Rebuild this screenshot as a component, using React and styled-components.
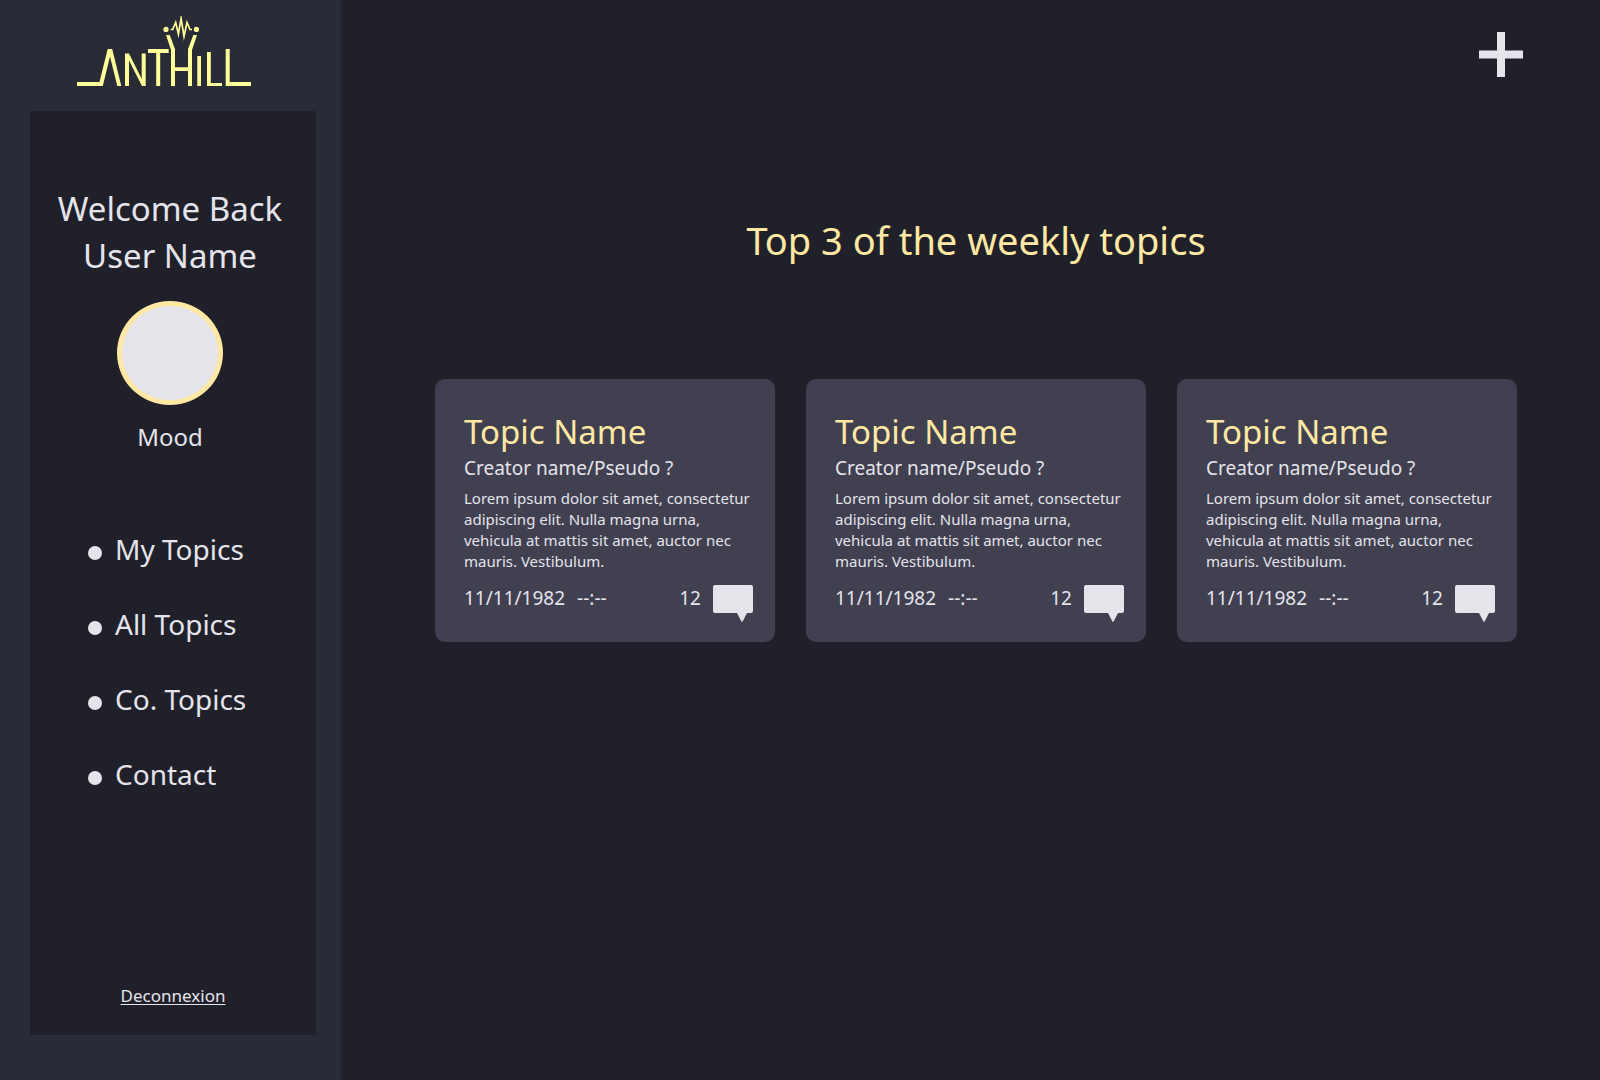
import React from "react";
import styled, { createGlobalStyle, ThemeProvider } from "styled-components";

const theme = {
  page: "#20202a",
  sidebar: "#292b37",
  card: "#404051",
  text: "#e5e4ea",
  accent: "#ffe8a3",
  logo: "#ffff99",
};

const GlobalStyle = createGlobalStyle`
  *, *::before, *::after { box-sizing: border-box; }
  body {
    margin: 0;
    background: ${theme.page};
    color: ${theme.text};
    font-family: "Segoe UI", "Noto Sans", "Open Sans", sans-serif;
  }
  h1, h2, p, ul { margin: 0; padding: 0; font-weight: 400; }
`;

const Layout = styled.div`
  display: flex;
  min-height: 100vh;
`;

const Sidebar = styled.aside`
  flex: 0 0 341px;
  display: flex;
  flex-direction: column;
  padding: 16px 25px 45px 30px;
  background: ${({ theme }) => theme.sidebar};
`;

const LogoLink = styled.a`
  align-self: flex-start;
  margin: 0 0 23px 46px;
  line-height: 0;
`;

const Panel = styled.div`
  flex: 1;
  display: flex;
  flex-direction: column;
  padding: 74px 0 27px;
  background: ${({ theme }) => theme.page};
`;

const Profile = styled.section`
  display: flex;
  flex-direction: column;
  align-items: center;
  padding-right: 6px;
`;

const Greeting = styled.p`
  font-size: 33px;
  line-height: 47px;
  text-align: center;
`;

const Avatar = styled.div`
  width: 106px;
  height: 104px;
  margin-top: 22px;
  border: 5px solid ${({ theme }) => theme.accent};
  border-radius: 50%;
  background: ${({ theme }) => theme.text};
`;

const Mood = styled.p`
  margin-top: 14px;
  font-size: 24px;
  line-height: 36px;
`;

const Menu = styled.ul`
  margin-top: 57px;
  padding-left: 58px;
  list-style: none;
`;

const MenuLink = styled.a`
  display: flex;
  align-items: baseline;
  gap: 13px;
  color: inherit;
  font-size: 28px;
  line-height: 75px;
  text-decoration: none;

  &::before {
    content: "";
    width: 14px;
    height: 14px;
    border-radius: 50%;
    background: ${({ theme }) => theme.text};
  }
`;

const LogoutLink = styled.a`
  align-self: center;
  margin-top: auto;
  color: inherit;
  font-size: 17px;
  line-height: 24px;
  text-decoration: underline 1px;
  text-underline-offset: 2px;
`;

const Main = styled.main`
  flex: 1;
  min-width: 0;
`;

const TopBar = styled.header`
  display: flex;
  justify-content: flex-end;
  padding: 32px 77px 0 0;
`;

const AddButton = styled.button`
  padding: 0;
  border: 0;
  background: none;
  color: ${({ theme }) => theme.text};
  line-height: 0;
  cursor: pointer;
`;

const Weekly = styled.section`
  padding: 136px 83px 0 94px;
`;

const Title = styled.h1`
  color: ${({ theme }) => theme.accent};
  font-size: 38px;
  line-height: 54px;
  text-align: center;
`;

const Cards = styled.div`
  display: grid;
  grid-template-columns: repeat(3, 1fr);
  gap: 31px;
  margin-top: 112px;
`;

const Card = styled.article`
  padding: 30px 22px 20px 29px;
  border-radius: 10px;
  background: ${({ theme }) => theme.card};
`;

const TopicName = styled.h2`
  color: ${({ theme }) => theme.accent};
  font-size: 33px;
  line-height: 46px;
`;

const Creator = styled.p`
  font-size: 19px;
  line-height: 26px;
`;

const Excerpt = styled.p`
  margin-top: 7px;
  font-size: 15px;
  line-height: 21px;
`;

const CardFooter = styled.footer`
  display: flex;
  align-items: flex-start;
  gap: 12px;
  margin-top: 13px;
  font-size: 19px;
  line-height: 26px;
`;

const Count = styled.span`
  margin-left: auto;
`;

function Logo() {
  return (
    <svg width="176" height="72" viewBox="76 16 176 72" role="img" aria-label="Anthill" fill={theme.logo}>
      <path d="M77 82H99.5L107.7 49H112.2L121.3 86H117.3L110 56.5L102.8 86H77Z" />
      <path d="M125 53.5H129L141.7 79V53.5H145.7V86H142L129 60.5V86H125Z" />
      <path d="M148 49H168.7V53H160.2V86H156.2V53H148Z" />
      <path d="M166 35H169.7L175 49V67.3H188V49L193.3 35H197L192 50V86H188V71H175V86H171V50Z" />
      <path d="M197.3 56H201V86H197.3Z" />
      <path d="M207 52H210.8V83H222V86H207Z" />
      <path d="M225.7 49H229.7V82H251V86H225.7Z" />
      <circle cx="166" cy="29.4" r="2.6" />
      <circle cx="196.4" cy="29.4" r="2.6" />
      <path
        d="M170.7 29.5H172.7L175.7 22.5L178.4 34L181.1 18.5L184 36.5L187 22.5L190 29.5H192"
        fill="none"
        stroke={theme.logo}
        strokeWidth="1.7"
        strokeMiterlimit="10"
      />
    </svg>
  );
}

function CommentIcon() {
  return (
    <svg width="40" height="37" viewBox="0 0 40 37" fill={theme.text} aria-hidden="true">
      <rect width="40" height="28" rx="2" />
      <path d="M24 28H34L29.6 36.4Q29 37.2 28.4 36.4Z" />
    </svg>
  );
}

const menu = ["My Topics", "All Topics", "Co. Topics", "Contact"];

const topic = {
  name: "Topic Name",
  creator: "Creator name/Pseudo ?",
  excerpt:
    "Lorem ipsum dolor sit amet, consectetur adipiscing elit. Nulla magna urna, vehicula at mattis sit amet, auctor nec mauris. Vestibulum.",
  date: "11/11/1982",
  time: "--:--",
  comments: 12,
};

const topics = [1, 2, 3].map((id) => ({ id, ...topic }));

function TopicCard({ name, creator, excerpt, date, time, comments }) {
  return (
    <Card>
      <TopicName>{name}</TopicName>
      <Creator>{creator}</Creator>
      <Excerpt>{excerpt}</Excerpt>
      <CardFooter>
        <span>{date}</span>
        <span>{time}</span>
        <Count>{comments}</Count>
        <CommentIcon />
      </CardFooter>
    </Card>
  );
}

export default function App() {
  return (
    <ThemeProvider theme={theme}>
      <GlobalStyle />
      <Layout>
        <Sidebar>
          <LogoLink href="#home">
            <Logo />
          </LogoLink>
          <Panel>
            <Profile>
              <Greeting>
                Welcome Back
                <br />
                User Name
              </Greeting>
              <Avatar />
              <Mood>Mood</Mood>
            </Profile>
            <nav>
              <Menu>
                {menu.map((label) => (
                  <li key={label}>
                    <MenuLink href="#topics">{label}</MenuLink>
                  </li>
                ))}
              </Menu>
            </nav>
            <LogoutLink href="#logout">Deconnexion</LogoutLink>
          </Panel>
        </Sidebar>
        <Main>
          <TopBar>
            <AddButton type="button" aria-label="Add a topic">
              <svg width="44" height="45" viewBox="0 0 44 45" fill="currentColor" aria-hidden="true">
                <path d="M18 0H26V18.6H44V26.6H26V45H18V26.6H0V18.6H18Z" />
              </svg>
            </AddButton>
          </TopBar>
          <Weekly>
            <Title>Top 3 of the weekly topics</Title>
            <Cards>
              {topics.map((item) => (
                <TopicCard key={item.id} {...item} />
              ))}
            </Cards>
          </Weekly>
        </Main>
      </Layout>
    </ThemeProvider>
  );
}
